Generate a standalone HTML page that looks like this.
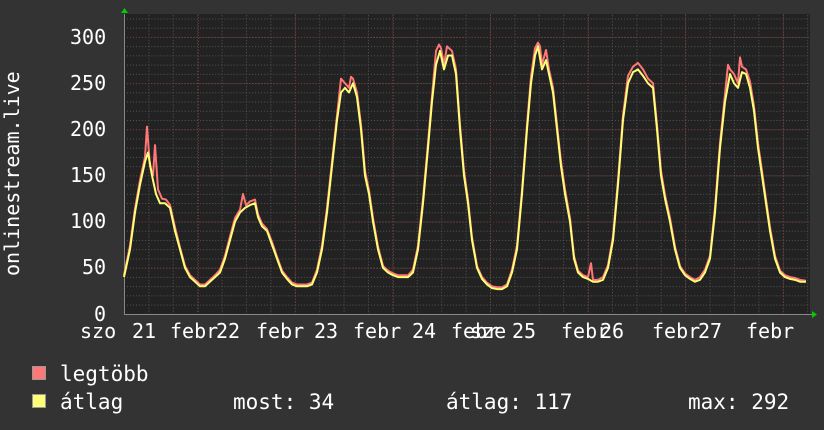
<!DOCTYPE html>
<html><head><meta charset="utf-8"><style>
body{margin:0;width:824px;height:430px;background:#333;overflow:hidden;font-family:"DejaVu Sans Mono","Liberation Mono",monospace;color:#fff}
.t{position:absolute;font-size:20px;line-height:20px;white-space:pre}
.l{font-size:21px}
</style></head><body>
<svg width="824" height="430" style="position:absolute;left:0;top:0">
<defs>
<pattern id="g" x="124" y="0" width="24.4" height="9.23" patternUnits="userSpaceOnUse">
<path d="M0.5 0V9.23" stroke="#555" stroke-width="1" stroke-dasharray="1 2"/>
<path d="M0 0.5H24.4" stroke="#555" stroke-width="1" stroke-dasharray="1 2"/>
</pattern>
</defs>
<rect x="124" y="14" width="686" height="300" fill="#222"/>
<rect x="124" y="14" width="686" height="300" fill="url(#g)"/>
<g stroke="#733" stroke-dasharray="1 2">
<path d="M124 37.5H810M124 83.6H810M124 129.8H810M124 175.9H810M124 222H810M124 268.2H810"/>
<path d="M198.5 14V314M295.5 14V314M393.5 14V314M490.5 14V314M588.5 14V314M685.5 14V314M783.5 14V314"/>
</g>
<path d="M124 314.5H812" stroke="#888"/>
<path d="M124.5 14V314" stroke="#888"/>
<path d="M121 13L124.5 8L128 13Z" fill="#0c0"/>
<path d="M812 311L817 314.5L812 318Z" fill="#0c0"/>
<g transform="translate(0,314) scale(1,-0.923)" fill="none" stroke-linejoin="round">
<polyline vector-effect="non-scaling-stroke" stroke="#f77" stroke-width="2" points="124,42 130,74 135,114 140,145 145,170 147,203 150,160 153,150 155,183 158,135 162,125 166,124 170,118 175,94 180,72 185,52 190,42 195,37 200,32 205,32 210,37 215,42 220,48 225,63 230,84 235,104 240,113 243,130 246,118 250,122 255,124 258,108 262,98 267,92 272,78 277,62 282,47 287,40 292,34 297,32 302,32 307,32 312,34 317,48 322,74 327,115 332,165 337,215 341,255 345,250 349,245 351,257 353,255 357,240 361,205 365,155 369,134 373,104 378,73 383,52 388,47 393,44 398,42 403,42 408,42 413,48 418,74 423,125 428,185 432,236 436,285 439,292 441,288 444,270 447,290 452,285 456,265 460,205 464,155 468,124 472,83 477,52 482,40 487,34 492,30 497,29 502,29 507,32 512,48 517,74 522,134 527,205 531,257 535,288 538,294 540,290 542,270 546,286 549,265 553,245 557,205 561,165 565,135 570,104 574,63 578,47 583,42 588,40 591,55 593,37 598,37 603,40 608,53 613,84 618,145 623,215 628,258 633,268 638,272 643,265 648,255 653,250 657,205 661,155 665,129 670,104 675,73 680,52 685,44 690,40 695,37 700,40 705,48 710,63 715,115 720,185 725,238 728,270 730,265 734,260 738,250 740,278 742,268 746,265 750,252 754,225 758,185 762,155 766,124 770,94 775,63 780,47 785,42 790,40 795,39 800,37 806,36"/>
<polyline vector-effect="non-scaling-stroke" stroke="#ff7" stroke-width="2" points="124,40 130,70 135,110 140,140 145,165 148,175 152,150 156,130 160,120 165,120 170,115 175,90 180,70 185,50 190,40 195,35 200,30 205,30 210,35 215,40 220,45 225,60 230,80 235,100 240,110 245,115 250,118 255,120 258,105 262,95 267,90 272,75 277,60 282,45 287,38 292,32 297,30 302,30 307,30 312,32 317,45 322,70 327,110 332,160 337,210 341,240 345,245 349,240 353,250 357,235 361,200 365,150 369,130 373,100 378,70 383,50 388,45 393,42 398,40 403,40 408,40 413,45 418,70 423,120 428,180 432,230 436,270 440,285 444,265 448,280 452,280 456,260 460,200 464,150 468,120 472,80 477,50 482,38 487,32 492,28 497,27 502,27 507,30 512,45 517,70 522,130 527,200 531,250 535,280 538,290 542,265 546,275 549,260 553,240 557,200 561,160 565,130 570,100 574,60 578,45 583,40 588,38 593,35 598,35 603,37 608,50 613,80 618,140 623,210 628,250 633,262 638,265 643,258 648,250 653,245 657,200 661,150 665,125 670,100 675,70 680,50 685,42 690,38 695,35 700,37 705,45 710,60 715,110 720,180 725,230 730,260 734,250 738,245 742,262 746,260 750,245 754,220 758,180 762,150 766,120 770,90 775,60 780,45 785,40 790,38 795,37 800,35 806,35"/>
</g>
<rect x="32.5" y="366.5" width="13" height="13" fill="#f77" stroke="#999"/>
<rect x="32.5" y="394.5" width="13" height="13" fill="#ff7" stroke="#999"/>
</svg>
<div class="t" style="left:70px;top:27px">300</div>
<div class="t" style="left:70px;top:73px">250</div>
<div class="t" style="left:70px;top:119px">200</div>
<div class="t" style="left:70px;top:165px">150</div>
<div class="t" style="left:70px;top:211px">100</div>
<div class="t" style="left:82px;top:257px">50</div>
<div class="t" style="left:94px;top:304px">0</div>
<div class="t" style="transform:rotate(-90deg);transform-origin:0 0;left:2px;top:276px">onlinestream.live</div>
<div class="t" style="left:80px;top:321px">szo</div>
<div class="t" style="left:132px;top:321px">21</div>
<div class="t" style="left:170px;top:321px">febr</div>
<div class="t" style="left:216px;top:321px">22</div>
<div class="t" style="left:256px;top:321px">febr</div>
<div class="t" style="left:314px;top:321px">23</div>
<div class="t" style="left:353px;top:321px">febr</div>
<div class="t" style="left:412px;top:321px">24</div>
<div class="t" style="left:451px;top:321px">febr</div>
<div class="t" style="left:470px;top:321px">sze</div>
<div class="t" style="left:512px;top:321px">25</div>
<div class="t" style="left:561px;top:321px">febr</div>
<div class="t" style="left:600px;top:321px">26</div>
<div class="t" style="left:652px;top:321px">febr</div>
<div class="t" style="left:698px;top:321px">27</div>
<div class="t" style="left:746px;top:321px">febr</div>
<div class="t l" style="left:60px;top:364px">legtöbb</div>
<div class="t l" style="left:60px;top:392px">átlag</div>
<div class="t l" style="left:233px;top:392px">most: 34</div>
<div class="t l" style="left:446px;top:392px">átlag: 117</div>
<div class="t l" style="left:688px;top:392px">max: 292</div>
</body></html>
